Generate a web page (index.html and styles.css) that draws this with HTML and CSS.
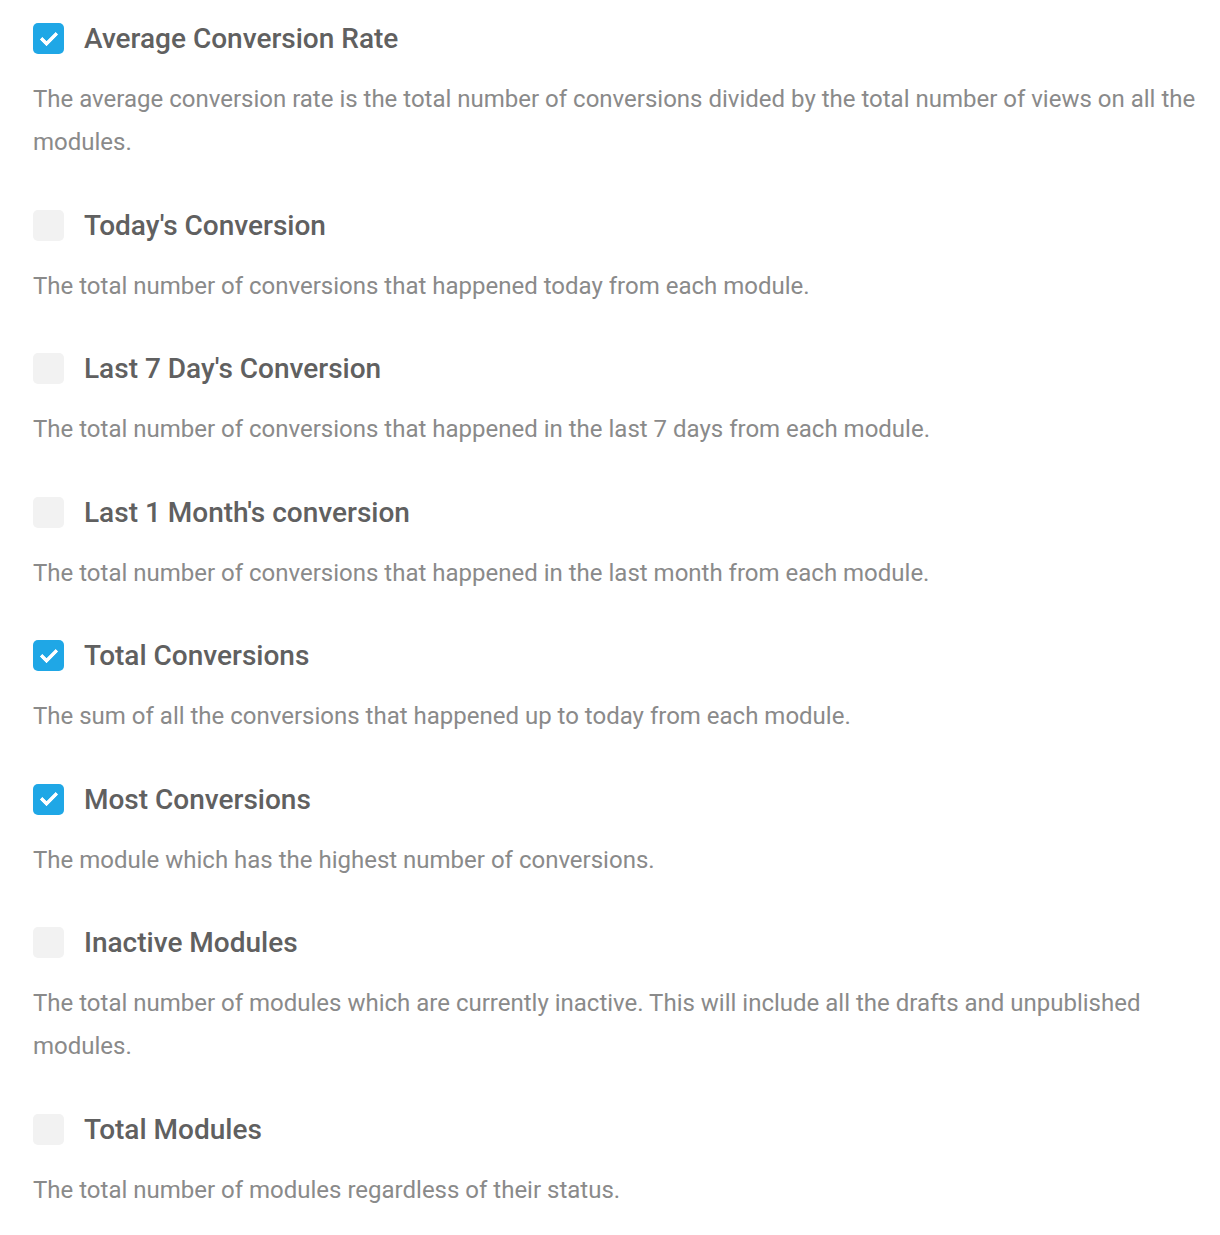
FILE: index.html
```html
<!doctype html>
<html lang="en">
  <head>
    <meta charset="UTF-8" />
    <meta name="viewport" content="width=device-width, initial-scale=1.0" />
    <title>Dashboard Widgets</title>
    <link rel="stylesheet" href="styles.css">
  </head>
  <body>
    <div class="widget-list">
      <div class="widget">
        <label class="widget-title">
          <input type="checkbox" checked />
          <span>Average Conversion Rate</span>
        </label>
        <p class="widget-desc">The average conversion rate is the total number of conversions divided by the total number of views on all the modules.</p>
      </div>

      <div class="widget">
        <label class="widget-title">
          <input type="checkbox" />
          <span>Today's Conversion</span>
        </label>
        <p class="widget-desc">The total number of conversions that happened today from each module.</p>
      </div>

      <div class="widget">
        <label class="widget-title">
          <input type="checkbox" />
          <span>Last 7 Day's Conversion</span>
        </label>
        <p class="widget-desc">The total number of conversions that happened in the last 7 days from each module.</p>
      </div>

      <div class="widget">
        <label class="widget-title">
          <input type="checkbox" />
          <span>Last 1 Month's conversion</span>
        </label>
        <p class="widget-desc">The total number of conversions that happened in the last month from each module.</p>
      </div>

      <div class="widget">
        <label class="widget-title">
          <input type="checkbox" checked />
          <span>Total Conversions</span>
        </label>
        <p class="widget-desc">The sum of all the conversions that happened up to today from each module.</p>
      </div>

      <div class="widget">
        <label class="widget-title">
          <input type="checkbox" checked />
          <span>Most Conversions</span>
        </label>
        <p class="widget-desc">The module which has the highest number of conversions.</p>
      </div>

      <div class="widget">
        <label class="widget-title">
          <input type="checkbox" />
          <span>Inactive Modules</span>
        </label>
        <p class="widget-desc">The total number of modules which are currently inactive. This will include all the drafts and unpublished modules.</p>
      </div>

      <div class="widget">
        <label class="widget-title">
          <input type="checkbox" />
          <span>Total Modules</span>
        </label>
        <p class="widget-desc">The total number of modules regardless of their status.</p>
      </div>
    </div>
  </body>
</html>
```

FILE: styles.css
```css
/* Widget picker list */
body {
  margin: 0;
  font-family: Roboto, "Liberation Sans", sans-serif;
  background-color: #ffffff;
}
.widget-list {
  display: flex;
  flex-direction: column;
  gap: 45.5px;
  padding: 23px 16px 0 33px;
}
.widget {
  display: flex;
  flex-direction: column;
  gap: 24px;
}
.widget-title {
  display: flex;
  align-items: center;
  gap: 20px;
  font-size: 28px;
  font-weight: 500;
  line-height: 31px;
  color: #606060;
  cursor: pointer;
}
.widget-desc {
  margin: 0;
  font-size: 24px;
  line-height: 43px;
  color: #8a8a8a;
}
/* Custom checkbox */
input[type="checkbox"] {
  appearance: none;
  -webkit-appearance: none;
  flex: none;
  width: 31px;
  height: 31px;
  margin: 0;
  border-radius: 5px;
  background-color: #f2f2f2;
  cursor: pointer;
  position: relative;
}
input[type="checkbox"]:checked {
  background-color: #1fa7e6;
}
input[type="checkbox"]:checked::after {
  content: "";
  position: absolute;
  left: 50%;
  top: 44%;
  width: 13px;
  height: 6px;
  border-left: 4px solid #ffffff;
  border-bottom: 4px solid #ffffff;
  border-radius: 1.5px;
  transform: translate(-50%, -50%) rotate(-45deg);
}
```
